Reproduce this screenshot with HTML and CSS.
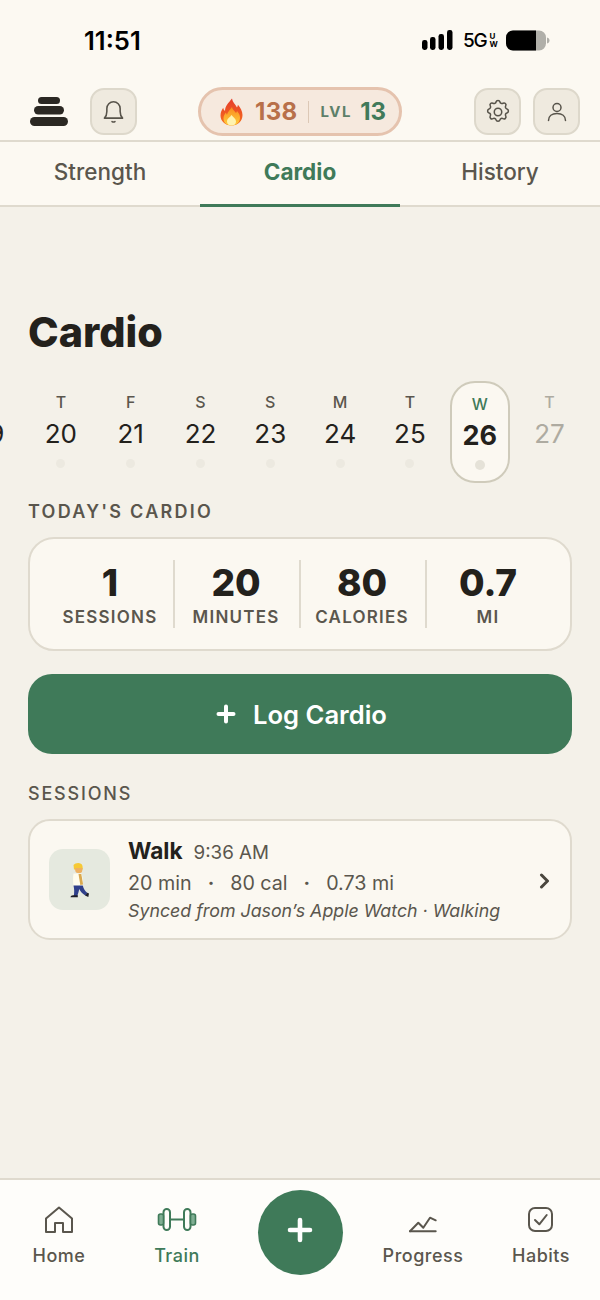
FILE: index.html
```html
<!DOCTYPE html>
<html lang="en">
  <head>
    <meta charset="UTF-8" />
    <meta name="viewport" content="width=device-width, initial-scale=1.0" />
    <title>Cardio</title>
    <link rel="stylesheet" href="styles.css">
  </head>
  <body>
    <div class="app">
      <div class="status-bar">
        <span class="clock">11:51</span>
        <div class="status-icons">
          <svg class="signal" width="31" height="21" viewBox="0 0 31 21">
            <rect x="0" y="10" width="5.5" height="10" rx="2.4" />
            <rect x="8" y="7" width="5.5" height="13" rx="2.4" />
            <rect x="16.5" y="4" width="5.5" height="16" rx="2.4" />
            <rect x="25" y="0" width="5.5" height="20" rx="2.4" />
          </svg>
          <span class="net">5G<span class="net-uw"><i>U</i><i>W</i></span></span>
          <svg class="battery" width="44" height="21" viewBox="0 0 44 21">
            <rect x="0" y="0.5" width="40" height="20" rx="7" fill="#b0afa9" />
            <path d="M7 .5h23v20H7a7 7 0 0 1-7-7v-6a7 7 0 0 1 7-7z" fill="#000" />
            <path d="M41 7.5c1.600.4 2.500 1.500 2.500 3s-.9 2.600-2.500 3z" fill="#b0afa9" />
          </svg>
        </div>
      </div>

      <header class="top-bar">
        <div class="top-left">
          <svg class="logo" width="38" height="29" viewBox="0 0 38 29">
            <rect x="8" y="0" width="22" height="7" rx="3.5" />
            <rect x="4" y="9" width="30" height="8.500" rx="4.2" />
            <rect x="0" y="20" width="38" height="9" rx="4.5" />
          </svg>
          <button class="icon-btn">
            <svg class="icon-bell" width="29" height="29" viewBox="0 0 24 24"><path d="M4.500 17.500c1.500-1.500 2-3 2-5.500V9.500a5.500 5.500 0 0 1 11 0V12c0 2.500.5 4 2 5.500z" /><path d="M10.800 20.300c.7.500 1.700.5 2.400 0" /></svg>
          </button>
        </div>
        <div class="streak">
          <svg class="flame" width="23" height="28" viewBox="0 0 23 28">
            <defs>
              <linearGradient id="flameOuter" x1="0" y1="0" x2="0" y2="1">
                <stop offset="0" stop-color="#e53c2c" />
                <stop offset="1" stop-color="#f7701c" />
              </linearGradient>
              <linearGradient id="flameMid" x1="0" y1="0" x2="0" y2="1">
                <stop offset="0" stop-color="#f98a1e" />
                <stop offset="1" stop-color="#ffcf3e" />
              </linearGradient>
            </defs>
            <path fill="url(#flameOuter)" d="M12 .5c.5 3.500 3 5.500 5 9 .5-.8.8-1.600.9-2.800 2.500 3 4.600 6.500 4.600 10.300 0 6-4.500 10.500-11 10.500S.5 23 .5 17.500c0-3 1.200-5.500 2.700-7.700.3 1.500.8 2.500 1.800 3.200 0-5 3.500-8 7-12.500z" />
            <path fill="url(#flameMid)" d="M12 9c.5 2.500 2 3.500 4 6 .4-.5.8-1 1-2 2 2.200 3 4.500 3 6.800 0 4.500-3.500 7.700-8.500 7.700s-8-3-8-7c0-2.500 1-4.500 2.500-6 .2 1 .5 1.700 1 2.300C7.500 14 10 12 12 9z" />
            <path fill="#fff3b0" d="M11.500 17c1.500 2 4.500 3.500 4.500 6.500 0 2.500-2 4-4.500 4s-4.500-1.500-4.500-4c0-3 3-4 4.500-6.500z" />
          </svg>
          <span class="streak-num">138</span>
          <span class="streak-sep"></span>
          <span class="lvl-label">LVL</span>
          <span class="lvl-num">13</span>
        </div>
        <div class="top-right">
          <button class="icon-btn">
            <svg class="icon-gear" width="28" height="28" viewBox="0 0 24 24"><path d="M10.300 2.900c.4-1.600 3-1.600 3.400 0a1.750 1.750 0 0 0 2.600 1.100c1.500-.9 3.200.8 2.300 2.300a1.750 1.750 0 0 0 1.100 2.600c1.600.4 1.600 3 0 3.400a1.750 1.750 0 0 0-1.100 2.600c.9 1.500-.8 3.200-2.300 2.300a1.750 1.750 0 0 0-2.600 1.100c-.4 1.600-3 1.600-3.400 0a1.750 1.750 0 0 0-2.600-1.100c-1.500.9-3.200-.8-2.300-2.300a1.750 1.750 0 0 0-1.100-2.600c-1.600-.4-1.600-3 0-3.400a1.750 1.750 0 0 0 1.100-2.600c-.9-1.500.8-3.200 2.300-2.300a1.750 1.750 0 0 0 2.600-1.100z" transform="translate(0 .5)" /><circle cx="12" cy="12" r="3.200" /></svg>
          </button>
          <button class="icon-btn">
            <svg width="24" height="24" viewBox="0 0 24 24"><circle cx="12" cy="7.500" r="4" /><path d="M3.500 20.500c0-4.300 3.500-7 8.500-7s8.500 2.700 8.500 7" /></svg>
          </button>
        </div>
      </header>

      <nav class="tabs">
        <a class="tab">Strength</a>
        <a class="tab tab-active">Cardio</a>
        <a class="tab">History</a>
      </nav>

      <main class="content">
        <h1 class="page-title">Cardio</h1>

        <div class="week">
          <div class="day day-cut"><span class="day-name">&nbsp;</span><span class="day-num">19</span></div>
          <div class="day"><span class="day-name">T</span><span class="day-num">20</span><span class="day-dot"></span></div>
          <div class="day"><span class="day-name">F</span><span class="day-num">21</span><span class="day-dot"></span></div>
          <div class="day"><span class="day-name">S</span><span class="day-num">22</span><span class="day-dot"></span></div>
          <div class="day"><span class="day-name">S</span><span class="day-num">23</span><span class="day-dot"></span></div>
          <div class="day"><span class="day-name">M</span><span class="day-num">24</span><span class="day-dot"></span></div>
          <div class="day"><span class="day-name">T</span><span class="day-num">25</span><span class="day-dot"></span></div>
          <div class="day day-today"><span class="day-name">W</span><span class="day-num">26</span><span class="day-dot"></span></div>
          <div class="day day-future"><span class="day-name">T</span><span class="day-num">27</span></div>
        </div>

        <h2 class="section-label label-today">TODAY'S CARDIO</h2>
        <section class="stats">
          <div class="stat"><span class="stat-num">1</span><span class="stat-name">SESSIONS</span></div>
          <div class="stat"><span class="stat-num">20</span><span class="stat-name">MINUTES</span></div>
          <div class="stat"><span class="stat-num">80</span><span class="stat-name">CALORIES</span></div>
          <div class="stat"><span class="stat-num">0.7</span><span class="stat-name">MI</span></div>
        </section>

        <button class="log-btn">
          <svg width="20" height="20" viewBox="0 0 20 20"><path d="M10 2.500v15M2.500 10h15" /></svg>
          <span>Log Cardio</span>
        </button>

        <h2 class="section-label label-sessions">SESSIONS</h2>
        <section class="session">
          <div class="session-icon">
            <svg width="22" height="36" viewBox="0 0 22 36">
              <path fill="#f6c935" d="M4.500 3c2-2.500 8-3 9 1l.3 3.500H5z" />
              <path fill="#eeb060" d="M6 6h7.500l-.3 3c-.3 1.500-1.500 2.200-3.200 2.200S6.500 10.500 6.300 9z" />
              <path fill="#fffcec" d="M4.500 11.500h8c1.300 4 1.700 8 1.500 12.500H4.500c-.6-4.500-.6-8.500 0-12.500z" />
              <path fill="#d9a94f" d="M9.500 12h2.800l1.800 10.500-2.800.6z" />
              <path fill="#2f3f8a" d="M4.500 23.500h9.300c.7 3 2.200 5.500 4.700 7.500l-2.200 2.500c-3-1.700-5-4-6-6.500-.5 2.500-1.200 4.800-2 7H4.800c.6-3.500.6-7-.3-10.500z" />
              <path fill="#1f1f28" d="M4 33.300h4.800v1.900H1.500c0-1 1.300-1.900 2.500-1.900zM16 33.500l2.500-2.700 1.500.8-.7 3.400z" />
            </svg>
          </div>
          <div class="session-body">
            <div class="session-head"><span class="session-name">Walk</span><span class="session-time">9:36 AM</span></div>
            <div class="session-meta"><span>20 min</span><span class="meta-dot">·</span><span>80 cal</span><span class="meta-dot">·</span><span>0.73 mi</span></div>
            <div class="session-note">Synced from Jason’s Apple Watch · Walking</div>
          </div>
          <svg class="chevron" width="12" height="16" viewBox="0 0 12 16"><path d="M2.500 2l6 6-6 6" /></svg>
        </section>
      </main>

      <nav class="bottom-nav">
        <a class="nav-item">
          <svg width="30" height="30" viewBox="0 0 30 30"><path d="M2 26V12.500L15 1.500l13 11V26h-9v-9h-8v9z" /></svg>
          <span>Home</span>
        </a>
        <a class="nav-item nav-active">
          <svg width="40" height="30" viewBox="0 0 40 30"><rect x="6.500" y="3" width="6.500" height="21" rx="3.200" /><rect x="27" y="3" width="6.500" height="21" rx="3.200" /><path d="M13 13.500h14" /><rect class="plate" x="1.500" y="8" width="5" height="11" rx="2" /><rect class="plate" x="33.500" y="8" width="5" height="11" rx="2" /></svg>
          <span>Train</span>
        </a>
        <div class="nav-plus-slot">
          <button class="nav-plus">
            <svg width="26" height="26" viewBox="0 0 26 26"><path d="M13 3v20M3 13h20" /></svg>
          </button>
        </div>
        <a class="nav-item">
          <svg width="30" height="30" viewBox="0 0 30 30"><path d="M2 25.300h25.700" /><path d="M2 25.300l8.300-8.600 5 5L22 11.700l5.700 2.600" /></svg>
          <span>Progress</span>
        </a>
        <a class="nav-item">
          <svg width="30" height="30" viewBox="0 0 30 30"><rect x="3" y="2" width="23" height="23" rx="6" /><path d="M9 14l4.300 4.300L20.700 9" /></svg>
          <span>Habits</span>
        </a>
      </nav>
    </div>
  </body>
</html>
```

FILE: styles.css
```css
* {
  box-sizing: border-box;
}

html {
  font-family: Inter, "Liberation Sans", sans-serif;
}

body {
  margin: 0;
  background-color: #f4f1e9;
  color: #23211c;
}

.app {
  display: flex;
  flex-direction: column;
  width: 600px;
  height: 1300px;
  overflow: hidden;
}

/* Status bar */
.status-bar {
  display: flex;
  align-items: center;
  justify-content: space-between;
  height: 82px;
  padding: 0 50px 2px 84px;
  background-color: #fcf9f2;
}

.clock {
  font-size: 25.6px;
  font-weight: 600;
  color: #000;
}

.status-icons {
  display: flex;
  align-items: center;
}

.signal rect {
  fill: #000;
}

.net {
  display: flex;
  align-items: center;
  width: 33px;
  margin: 0 10px 0 10px;
  font-size: 19px;
  font-weight: 500;
  letter-spacing: -1.2px;
  color: #000;
  gap: 3px;
}

.net-uw {
  display: flex;
  flex-direction: column;
  font-size: 8px;
  font-weight: 700;
  line-height: 8px;
  letter-spacing: 0;
}

.net-uw i {
  font-style: normal;
}

/* Top bar */
.top-bar {
  display: grid;
  grid-template-columns: 1fr auto 1fr;
  align-items: center;
  height: 60px;
  padding: 1px 20px 0;
  background-color: #fcf9f2;
  border-bottom: 2px solid #dfdace;
}

.top-left,
.top-right {
  display: flex;
  align-items: center;
}

.top-left {
  gap: 22px;
  padding-left: 10px;
}

.top-right {
  gap: 12px;
  justify-self: end;
}

.logo rect {
  fill: #2b2823;
}

.icon-btn {
  display: flex;
  align-items: center;
  justify-content: center;
  width: 47px;
  height: 47px;
  padding: 0;
  background-color: #efeadf;
  border: 2px solid #ddd8cb;
  border-radius: 14px;
}

.icon-btn svg {
  fill: none;
  stroke: #57534a;
  stroke-width: 1.5;
  stroke-linecap: round;
  stroke-linejoin: round;
}

.icon-btn .icon-bell,
.icon-btn .icon-gear {
  stroke-width: 1.3;
}

.streak {
  display: flex;
  align-items: center;
  width: 204px;
  height: 49px;
  padding-left: 19px;
  background-color: #f6e9de;
  border: 3px solid #e5c3ae;
  border-radius: 25px;
}

.flame {
  margin-right: 12px;
}

.streak-num {
  font-size: 24px;
  font-weight: 700;
  letter-spacing: 0.3px;
  color: #b8704a;
}

.streak-sep {
  flex: none;
  width: 1px;
  height: 22px;
  margin: 0 11px;
  background-color: #dcc8b6;
}

.lvl-label {
  font-size: 15px;
  font-weight: 700;
  letter-spacing: 1.6px;
  color: #5d8069;
  margin-right: 8px;
}

.lvl-num {
  font-size: 24px;
  font-weight: 700;
  color: #417a5a;
}

/* Tabs */
.tabs {
  display: flex;
  height: 65px;
  background-color: #fcf9f2;
  border-bottom: 2px solid #dfdace;
}

.tab {
  flex: 1;
  display: flex;
  align-items: center;
  justify-content: center;
  font-size: 22.5px;
  font-weight: 500;
  color: #5a564d;
  padding-bottom: 3px;
  margin-bottom: -2px;
  border-bottom: 3px solid transparent;
}

.tab-active {
  font-weight: 700;
  color: #3f7a59;
  border-bottom-color: #3f7a59;
}

/* Content */
.content {
  flex: 1;
  display: flex;
  flex-direction: column;
  padding: 0 28px;
  min-height: 0;
}

.page-title {
  margin: 102px 0 0;
  font-size: 41.3px;
  line-height: 47px;
  font-weight: 800;
  color: #23211c;
}

.week {
  display: flex;
  height: 102px;
  margin: 25px -28px 0;
  overflow: hidden;
}

.day {
  flex: none;
  display: flex;
  flex-direction: column;
  align-items: center;
  width: 69.8px;
  padding-top: 11px;
}

.day-cut {
  margin-left: -43.8px;
}

.day-name {
  font-size: 16px;
  line-height: 20px;
  font-weight: 500;
  color: #5a564d;
}

.day-num {
  margin-top: 4px;
  font-size: 26px;
  line-height: 36px;
  color: #23211c;
}

.day-dot {
  width: 9px;
  height: 9px;
  margin-top: 7px;
  border-radius: 50%;
  background-color: #ece9e0;
}

.day-today {
  width: 60px;
  margin: 0 4.9px;
  background-color: #fbf8f1;
  border: 2px solid #cfcbbb;
  border-radius: 25px;
}

.day-today .day-name {
  color: #3f7a59;
}

.day-today .day-num {
  font-size: 27px;
  font-weight: 700;
}

.day-today .day-dot {
  width: 10px;
  height: 10px;
  margin-top: 6px;
  background-color: #e5e2d8;
}

.day-future .day-name,
.day-future .day-num {
  color: #aeaba1;
}

.section-label {
  margin: 0;
  font-size: 18px;
  line-height: 22px;
  font-weight: 600;
  letter-spacing: 2.25px;
  color: #5a564d;
}

.label-today {
  margin-top: 18px;
}

.stats {
  display: grid;
  grid-template-columns: repeat(4, 1fr);
  align-items: center;
  height: 114px;
  margin-top: 14px;
  padding: 0 19px 0 17px;
  background-color: #fbf8f1;
  border: 2px solid #dfdace;
  border-radius: 26px;
}

.stat {
  display: flex;
  flex-direction: column;
  align-items: center;
  height: 68px;
  padding-right: 2px;
  border-left: 2px solid #dfdace;
}

.stat:first-child {
  padding-right: 0;
  border-left: none;
}

.stat-num {
  font-size: 37px;
  line-height: 46px;
  font-weight: 800;
  color: #23211c;
}

.stat-name {
  font-size: 17px;
  line-height: 22px;
  font-weight: 600;
  letter-spacing: 1.2px;
  color: #5a564d;
}

.log-btn {
  display: flex;
  align-items: center;
  justify-content: center;
  gap: 17px;
  height: 80px;
  margin-top: 23px;
  padding: 0 0 0 3px;
  font-family: inherit;
  font-size: 25.6px;
  font-weight: 600;
  color: #fff;
  background-color: #3f7a59;
  border: none;
  border-radius: 24px;
}

.log-btn svg {
  fill: none;
  stroke: #fff;
  stroke-width: 4;
  stroke-linecap: round;
}

.label-sessions {
  margin-top: 29px;
  letter-spacing: 1.8px;
  font-weight: 500;
}

.session {
  display: flex;
  align-items: center;
  height: 121px;
  margin-top: 14px;
  padding: 0 19px;
  background-color: #fbf8f1;
  border: 2px solid #dfdace;
  border-radius: 22px;
}

.session-icon {
  flex: none;
  display: flex;
  align-items: center;
  justify-content: center;
  width: 61px;
  height: 61px;
  background-color: #e5e9df;
  border-radius: 14px;
}

.session-body {
  flex: 1;
  margin-left: 18px;
}

.session-head {
  display: flex;
  align-items: baseline;
  gap: 11px;
  line-height: 30px;
}

.session-name {
  font-size: 22.6px;
  font-weight: 700;
  color: #23211c;
}

.session-time {
  font-size: 18.8px;
  color: #5a564d;
}

.session-meta {
  display: flex;
  margin-top: 1px;
  font-size: 19.7px;
  line-height: 28px;
  color: #5a564d;
}

.meta-dot {
  margin: 0 16px;
  font-weight: 700;
}

.session-note {
  margin-top: 2px;
  font-size: 17.8px;
  line-height: 24px;
  font-style: italic;
  color: #5a564d;
}

.chevron {
  margin-top: 2px;
  fill: none;
  stroke: #4a463e;
  stroke-width: 3;
  stroke-linecap: round;
  stroke-linejoin: round;
}

/* Bottom nav */
.bottom-nav {
  display: flex;
  height: 122px;
  padding-top: 26px;
  background-color: #fefdfa;
  border-top: 2px solid #dfdace;
}

.nav-item {
  display: flex;
  flex-direction: column;
  align-items: center;
  width: 118px;
  font-size: 18px;
  line-height: 24px;
  font-weight: 500;
  letter-spacing: 0.5px;
  color: #5a564d;
  gap: 8px;
}

.nav-item svg {
  fill: none;
  stroke: #5a564d;
  stroke-width: 2;
  stroke-linecap: round;
  stroke-linejoin: round;
}

.nav-active {
  color: #3f7a59;
}

.nav-active svg {
  stroke: #3f7a59;
}

.nav-active .plate {
  fill: #7fae92;
  stroke-width: 1.6;
}

.nav-plus-slot {
  flex: 1;
  display: flex;
  justify-content: center;
}

.nav-plus {
  width: 85px;
  height: 85px;
  margin-top: -16px;
  padding: 0 0 5px;
  display: flex;
  align-items: center;
  justify-content: center;
  background-color: #3f7a59;
  border: none;
  border-radius: 50%;
}

.nav-plus svg {
  fill: none;
  stroke: #fff;
  stroke-width: 4.6;
  stroke-linecap: round;
}
```
